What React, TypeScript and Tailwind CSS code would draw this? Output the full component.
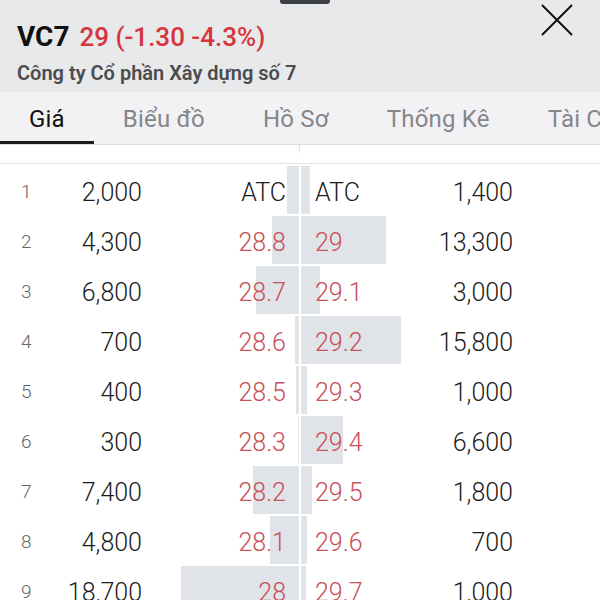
type Row = {
  n: number
  bidVol: string
  bid: string
  bidBar: number
  ask: string
  askBar: number
  askVol: string
}

const ROWS: Row[] = [
  { n: 1, bidVol: '2,000',  bid: 'ATC',  bidBar: 12,  ask: 'ATC',  askBar: 9,   askVol: '1,400'  },
  { n: 2, bidVol: '4,300',  bid: '28.8', bidBar: 27,  ask: '29',   askBar: 85,  askVol: '13,300' },
  { n: 3, bidVol: '6,800',  bid: '28.7', bidBar: 43,  ask: '29.1', askBar: 19,  askVol: '3,000'  },
  { n: 4, bidVol: '700',    bid: '28.6', bidBar: 4,   ask: '29.2', askBar: 100, askVol: '15,800' },
  { n: 5, bidVol: '400',    bid: '28.5', bidBar: 3,   ask: '29.3', askBar: 6,   askVol: '1,000'  },
  { n: 6, bidVol: '300',    bid: '28.3', bidBar: 1,   ask: '29.4', askBar: 42,  askVol: '6,600'  },
  { n: 7, bidVol: '7,400',  bid: '28.2', bidBar: 46,  ask: '29.5', askBar: 11,  askVol: '1,800'  },
  { n: 8, bidVol: '4,800',  bid: '28.1', bidBar: 29,  ask: '29.6', askBar: 6,   askVol: '700'    },
  { n: 9, bidVol: '18,700', bid: '28',   bidBar: 118, ask: '29.7', askBar: 5,   askVol: '1,000'  },
]

const TABS = ['Giá', 'Biểu đồ', 'Hồ Sơ', 'Thống Kê', 'Tài Chính']

function priceColor(p: string) {
  return p === 'ATC' ? 'text-[#1c1c1c]' : 'text-[#c94f5a]'
}

export default function App() {
  return (
    <div className="w-[600px] h-[600px] overflow-hidden bg-white font-['Roboto',sans-serif]">
      {/* header */}
      <header className="relative h-[92px] bg-[#e8e9eb] flex justify-between">
        <div className="absolute top-0 left-[280px] w-[50px] h-[4px] rounded-b-[3px] bg-[#3c3f44]" />
        <div className="pl-[17px] pt-[23px]">
          <div className="flex items-baseline gap-[10px] leading-none">
            <span className="text-[28px] font-bold text-[#111]">VC7</span>
            <span className="text-[26px] font-medium text-[#d7353d]">29 (-1.30 -4.3%)</span>
          </div>
          <p className="mt-[12px] text-[20px] leading-none font-semibold text-[#4b4c4e]">Công ty Cổ phần Xây dựng số 7</p>
        </div>
        <button className="mt-[4px] mr-[27px] self-start text-[#111]">
          <svg width="32" height="32" viewBox="0 0 32 32" fill="none" stroke="currentColor" strokeWidth="2">
            <path d="M1 1 L31 31 M31 1 L1 31" />
          </svg>
        </button>
      </header>

      {/* tabs */}
      <nav className="h-[53px] bg-[#f2f2f4] border-b border-[#dcdcde] flex whitespace-nowrap overflow-hidden">
        {TABS.map((t, i) => (
          <div
            key={t}
            className={`px-[29px] pt-[5px] flex items-center text-[24px] tracking-[0.2px] border-b-[3px] ${
              i === 0 ? 'border-[#1d1d1d] text-[#111]' : 'border-transparent text-[#85868a]'
            }`}
          >
            {t}
          </div>
        ))}
      </nav>

      {/* column head strip */}
      <div className="h-[19px] border-b border-[#e2e2e4] flex">
        <div className="ml-[299px] w-px h-[8px] bg-[#e4e4e6]" />
      </div>

      {/* depth rows */}
      <div className="font-light">
        {ROWS.map(r => (
          <div key={r.n} className="h-[50px] pt-[2px] flex items-stretch">
            <div className="w-[60px] pl-[21px] pt-[5px] flex items-center text-[19px] text-[#666]">{r.n}</div>
            <div className="w-[82px] pt-[5px] flex items-center justify-end text-[25px] text-[#1c1c1c]">{r.bidVol}</div>
            <div className="relative w-[157px] pt-[5px] flex items-center justify-end pr-[13px]">
              <div className="absolute right-0 top-0 bottom-0 bg-[#e0e4e8]" style={{ width: r.bidBar }} />
              <span className={`relative text-[25px] ${priceColor(r.bid)}`}>{r.bid}</span>
            </div>
            <div className="w-[2px]" />
            <div className="relative w-[124px] pt-[5px] flex items-center pl-[14px]">
              <div className="absolute left-0 top-0 bottom-0 bg-[#e0e4e8]" style={{ width: r.askBar }} />
              <span className={`relative text-[25px] ${priceColor(r.ask)}`}>{r.ask}</span>
            </div>
            <div className="w-[88px] pt-[5px] flex items-center justify-end text-[25px] text-[#1c1c1c]">{r.askVol}</div>
          </div>
        ))}
      </div>
    </div>
  )
}
